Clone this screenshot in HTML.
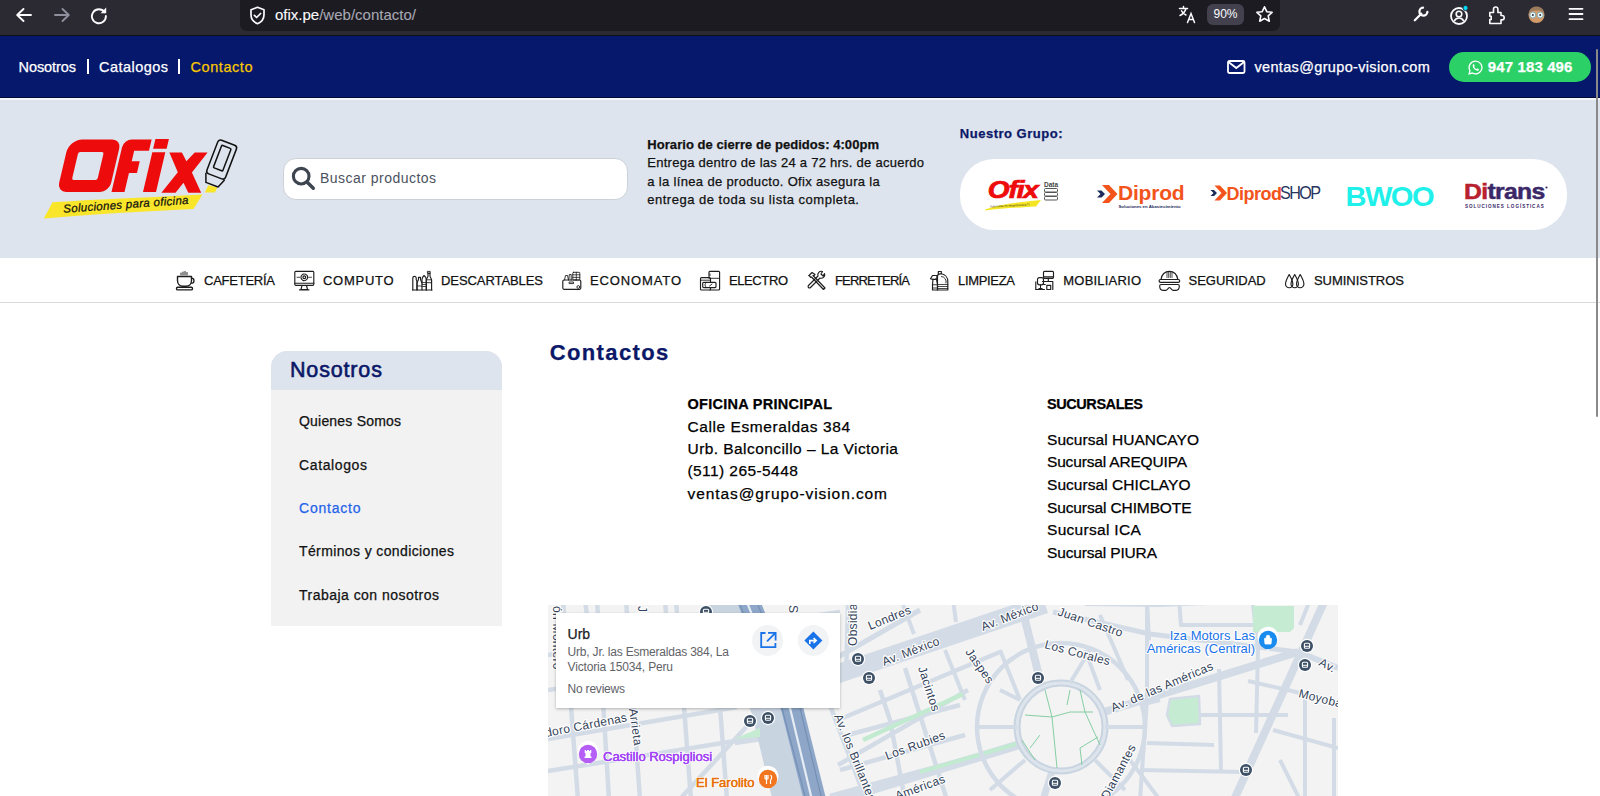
<!DOCTYPE html>
<html><head><meta charset="utf-8">
<style>
*{margin:0;padding:0;box-sizing:border-box}
html,body{width:1600px;height:796px;overflow:hidden;background:#fff;font-family:"Liberation Sans",sans-serif}
.a{position:absolute;white-space:nowrap;-webkit-text-stroke:0.25px currentColor}
#chrome{position:absolute;left:0;top:0;width:1600px;height:36px;background:#2b2a33;border-bottom:1px solid #0f0f14}
#url{position:absolute;left:240px;top:0;width:1040px;height:31px;background:#1c1b22;border-radius:0 0 7px 7px}
#topbar{position:absolute;left:0;top:36px;width:1600px;height:62px;background:#06186b;border-bottom:1px solid #020a3a}
#hdr{position:absolute;left:0;top:98px;width:1600px;height:160px;background:#dee4ed;border-top:2px solid #f3f5f9}
#nav{position:absolute;left:0;top:258px;width:1600px;height:45px;background:#fff;border-bottom:1px solid #d9d9d9}
.tb{font-size:14px;color:#fff}
.nt{font-size:14px;color:#111}
.sb{position:absolute;left:271px;top:351px;width:231px;height:275px;background:#f2f2f2;border-radius:16px 16px 0 0;overflow:hidden}
.sbh{position:absolute;left:0;top:0;width:231px;height:39px;background:#dee4ed}
.lk{font-size:13.5px;color:#111}
.ct{font-size:16px;color:#111}
#map{position:absolute;left:548px;top:605px;width:790px;height:191px;background:#f3f3f3;overflow:hidden}
</style></head><body>
<div id="chrome">
  <svg class="a" style="left:14px;top:6px" width="20" height="18" viewBox="0 0 20 18"><path d="M17 9H3.5M9.5 3L3.2 9l6.3 6" fill="none" stroke="#fbfbfe" stroke-width="1.9" stroke-linecap="round" stroke-linejoin="round"/></svg>
  <svg class="a" style="left:52px;top:6px" width="20" height="18" viewBox="0 0 20 18"><path d="M3 9h13.5M10.5 3l6.3 6-6.3 6" fill="none" stroke="#8f8f9d" stroke-width="1.9" stroke-linecap="round" stroke-linejoin="round"/></svg>
  <svg class="a" style="left:89px;top:5px" width="20" height="20" viewBox="0 0 20 20"><path d="M15.6 7.2A7 7 0 1 0 16.9 11" fill="none" stroke="#fbfbfe" stroke-width="1.9" stroke-linecap="round"/><path d="M17.2 2.6v5.6h-5.6z" fill="#fbfbfe"/></svg>
  <div id="url">
    <svg class="a" style="left:9px;top:6px" width="17" height="19" viewBox="0 0 17 19"><path d="M8.5 1.3L2 3.8v5c0 4.2 2.8 7.4 6.5 8.9 3.7-1.5 6.5-4.7 6.5-8.9v-5z" fill="none" stroke="#fbfbfe" stroke-width="1.7" stroke-linejoin="round"/><path d="M5.4 9.4l2.2 2.1 4-4" fill="none" stroke="#fbfbfe" stroke-width="1.7" stroke-linecap="round" stroke-linejoin="round"/></svg>
    <div class="a" id="urltxt" style="left:35px;top:6px;font-size:15px;color:#fbfbfe;-webkit-text-stroke:0.1px currentColor">ofix.pe<span style="color:#a8a8b3">/web/contacto/</span></div>
    <svg class="a" style="left:938px;top:5px" width="19" height="19" viewBox="0 0 19 19"><g fill="none" stroke="#fbfbfe" stroke-width="1.5" stroke-linecap="round"><path d="M1.5 3.5h8M5.5 1.5v2M8 3.5c-.8 3-2.8 5.5-6 7M3.5 5.8c1.2 2 2.8 3.4 4.5 4.2"/><path d="M9.5 17.5l3.5-9 3.5 9M10.8 14.5h4.4"/></g></svg>
    <div class="a" style="left:967px;top:4px;width:37px;height:21px;border-radius:6px;background:#42414d;color:#fbfbfe;font-size:12px;text-align:center;line-height:21px;-webkit-text-stroke:0">90%</div>
    <svg class="a" style="left:1015px;top:5px" width="19" height="19" viewBox="0 0 19 19"><path d="M9.5 1.8l2.3 4.9 5.3.6-3.9 3.6 1.1 5.3-4.8-2.7-4.8 2.7 1.1-5.3-3.9-3.6 5.3-.6z" fill="none" stroke="#fbfbfe" stroke-width="1.6" stroke-linejoin="round"/></svg>
  </div>
  <svg class="a" style="left:1412px;top:5px" width="18" height="18" viewBox="0 0 18 18"><path d="M2.8 15.2L9.3 8.7" stroke="#fbfbfe" stroke-width="2.3" stroke-linecap="round"/><path d="M11 2.6A4 4 0 1 0 15.4 7" fill="none" stroke="#fbfbfe" stroke-width="2.3" stroke-linecap="round"/></svg>
  <svg class="a" style="left:1449px;top:4px" width="22" height="22" viewBox="0 0 22 22"><circle cx="10" cy="12" r="8" fill="none" stroke="#fbfbfe" stroke-width="1.8"/><circle cx="10" cy="10" r="2.8" fill="none" stroke="#fbfbfe" stroke-width="1.6"/><path d="M5.2 17c1.2-2.2 2.8-3 4.8-3s3.6.8 4.8 3" fill="none" stroke="#fbfbfe" stroke-width="1.6"/><circle cx="16.5" cy="4" r="2.6" fill="#0df" stroke="#2b2a33" stroke-width="1"/></svg>
  <svg class="a" style="left:1488px;top:5px" width="18" height="20" viewBox="0 0 18 20"><path d="M1.8 7.5H5.5V4.2A2.2 2.2 0 0 1 9.9 4.2V7.5H13V10.5H14A2.2 2.2 0 0 1 14 14.9H13V18.5H1.8V14.5H3.2V11.2H1.8Z" fill="none" stroke="#fbfbfe" stroke-width="1.6" stroke-linejoin="round"/></svg>
  <svg class="a" style="left:1527px;top:5px" width="19" height="19" viewBox="0 0 19 19"><circle cx="9.5" cy="10" r="8" fill="#d39a6a"/><path d="M1.8 8.5C2.5 3.5 5.5 1.5 9.5 1.5S16.5 3.5 17.2 8.5C15 6 12.5 5.5 9.5 5.5S4 6 1.8 8.5Z" fill="#9c7a5c"/><circle cx="5.8" cy="10" r="3" fill="#e8f6ff" stroke="#8aa" stroke-width="1"/><circle cx="13.2" cy="10" r="3" fill="#e8f6ff" stroke="#8aa" stroke-width="1"/><circle cx="5.8" cy="10" r="1" fill="#333"/><circle cx="13.2" cy="10" r="1" fill="#333"/></svg>
  <svg class="a" style="left:1568px;top:6px" width="16" height="16" viewBox="0 0 16 16"><path d="M1.5 2.8h13M1.5 8h13M1.5 13.2h13" stroke="#fbfbfe" stroke-width="1.8" stroke-linecap="round"/></svg>
</div>
<div id="topbar">
  <div class="a" style="left:87px;top:23px;width:2px;height:15px;background:#fff"></div>
  <div class="a" style="left:178px;top:23px;width:2px;height:15px;background:#fff"></div>
  <svg class="a" style="left:1227px;top:24px" width="19" height="14" viewBox="0 0 19 14"><rect x="1" y="1" width="16.5" height="12" rx="1.5" fill="none" stroke="#fff" stroke-width="1.8"/><path d="M1.5 2l7.8 6 7.8-6" fill="none" stroke="#fff" stroke-width="1.8"/></svg>
  <div class="a" style="left:1449px;top:15.5px;width:142px;height:30px;border-radius:15px;background:#2bd066"></div>
  <svg class="a" style="left:1468px;top:23.5px" width="15" height="15" viewBox="0 0 16 16"><path d="M8 1.2a6.8 6.8 0 0 0-5.9 10.2L1.2 14.8l3.5-.9A6.8 6.8 0 1 0 8 1.2z" fill="none" stroke="#fff" stroke-width="1.4"/><path d="M5.4 4.6c.3-.3.7-.3.9 0l.8 1.5c.1.3 0 .5-.2.7l-.4.4c.5 1.1 1.4 2 2.4 2.5l.5-.5c.2-.2.4-.2.7-.1l1.4.7c.3.2.3.5.1.8-.6.9-1.4 1.1-2.4.7-1.9-.8-3.2-2.1-4-3.9-.3-.9-.2-1.8.2-2.8z" fill="#fff"/></svg>
</div>
<div id="hdr"></div>
<svg class="a" style="left:0;top:98px" width="260" height="160" viewBox="0 98 260 160">
  <path d="M43.8 218.5L52.5 202.3C100 199 150 197.5 202.5 194.5L193.5 208.9C140 211.5 95 214 43.8 218.5Z" fill="#f9e62a"/>
  <g fill="#ee0b0b" transform="translate(0,192) skewX(-13.2) translate(0,-192)">
    <path fill-rule="evenodd" d="M70 139.4H100A9 9 0 0 1 109 148.4V183A9 9 0 0 1 100 192H66A9 9 0 0 1 57 183V152.4A13 13 0 0 1 70 139.4Z M71 152H92.5A2 2 0 0 1 94.5 154V178A2 2 0 0 1 92.5 180H71A2 2 0 0 1 69 178V154A2 2 0 0 1 71 152Z"/>
    <path d="M119.5 139.4H139.3V150.7H124.5V161.3H132.5V172.9H124.5V192H111.5V147.4A8 8 0 0 1 119.5 139.4Z"/>
    <path d="M143 139H156.5V148.8H143Z M143 152.3H156V192H143Z"/>
  </g>
  <path fill="#ee0b0b" d="M169.4 152.4H181.9L186.4 161.3L194.7 152.4H207.6L191.9 172.6L201.2 192.8H188.3L183.5 182.8L175.5 192.8H161.4L177.8 172.2Z"/>
  <path d="M208.3 185.2L217.5 187.6L214.8 192.6H204.8Z" fill="#f9e62a"/>
  <g transform="translate(221.5,160) rotate(21)">
        <rect x="-10" y="-18.5" width="20" height="36" rx="3" fill="none" stroke="#111" stroke-width="1.5"/>
    <rect x="-5" y="-14" width="10" height="24" rx="1" fill="none" stroke="#111" stroke-width="1.5"/>
    <path d="M-10 17.5L-6.5 26.5H6.5L10 17.5" fill="none" stroke="#111" stroke-width="1.5" stroke-linejoin="round"/>
  </g>
  <text x="0" y="0" transform="translate(63.5,212.8) rotate(-4.1)" font-family="Liberation Sans" font-style="italic" font-size="11.5" fill="#111" stroke="#111" stroke-width="0.25" letter-spacing="0.3">Soluciones para oficina</text>
</svg>
<div class="a" style="left:283px;top:157.5px;width:345px;height:42px;background:#fff;border:1px solid #cdd2d9;border-radius:13px"></div>
<svg class="a" style="left:288px;top:163px" width="30" height="30" viewBox="288 163 30 30"><circle cx="301.2" cy="176.2" r="7.8" fill="none" stroke="#3d4550" stroke-width="3.1"/><path d="M307 182L313.3 188.3" stroke="#3d4550" stroke-width="3.4" stroke-linecap="round"/></svg>
<div class="a" style="left:960px;top:158.5px;width:607px;height:71px;background:#fff;border-radius:34px"></div>
<svg class="a" style="left:960px;top:158px" width="607" height="72" viewBox="960 158 607 72">
  <!-- Ofix Data -->
  <path d="M985 209.5C1000 204 1020 202 1041 200L1036 206.5C1020 207.5 1000 208.5 985 210.5Z" fill="#f5e625"/>
  <text x="988" y="198.5" font-family="Liberation Sans" font-weight="bold" font-style="italic" font-size="25" fill="#ee0b0b" stroke="#ee0b0b" stroke-width="0.8" letter-spacing="-1" transform="translate(989,198.5) scale(1.12,0.92) translate(-989,-198.5)">Ofix</text>
  <text x="1044" y="187" font-family="Liberation Sans" font-weight="bold" font-size="6.5" fill="#444">Data</text>
  <g fill="none" stroke="#555" stroke-width="1"><rect x="1044.5" y="188.5" width="13" height="3.5" rx="1"/><rect x="1044.5" y="192.5" width="13" height="3.5" rx="1"/><rect x="1044.5" y="196.5" width="13" height="3.5" rx="1"/></g>
  <text x="990" y="206.5" font-family="Liberation Sans" font-size="2.8" fill="#222" transform="rotate(-3 1010 206)">Soluciones en infraestructura TI</text>
  <!-- Diprod -->
  <path d="M1097 190.5h4.5l3.5 3.5-3.5 3.5h-4.5l3.5-3.5z" fill="#1c2a5a"/>
  <path d="M1102 185h7l8.5 9-8.5 9h-7l8.5-9z" fill="#f2541b"/>
  <text x="1118" y="199.5" font-family="Liberation Sans" font-weight="bold" font-size="21" fill="#f2541b" letter-spacing="-0.2">Diprod</text>
  <text x="1118.5" y="208" font-family="Liberation Sans" font-weight="bold" font-size="4.3" fill="#1c2a5a">Soluciones en Abastecimiento</text>
  <!-- DiprodSHOP -->
  <path d="M1210.5 190h3.5l3 3-3 3h-3.5l3-3z" fill="#1c2a5a"/>
  <path d="M1214.5 185.5h5.5l7 7.5-7 7.5h-5.5l7-7.5z" fill="#f2541b"/>
  <text x="1226.5" y="199.5" font-family="Liberation Sans" font-weight="bold" font-size="18" fill="#f2541b" letter-spacing="-0.5">Diprod</text>
  <text x="1280" y="199.5" font-family="Liberation Sans" font-size="18" fill="#27355f" letter-spacing="-1.8" transform="translate(1280,199.5) scale(0.9,1.05) translate(-1280,-199.5)">SHOP</text>
  <!-- BWOO -->
  <text x="1345.5" y="206.5" font-family="Liberation Sans" font-weight="bold" font-size="30" fill="#1ff0ea" letter-spacing="-1.6" transform="translate(1345.5,206.5) scale(0.97,0.9) translate(-1345.5,-206.5)">BWOO</text>
  <!-- Ditrans -->
  <text x="1464" y="199.5" font-family="Liberation Sans" font-weight="bold" font-size="22.5" letter-spacing="-0.6" stroke-width="0.5" transform="translate(1464,199.5) scale(1.1,1) translate(-1464,-199.5)"><tspan fill="#b8222f" stroke="#b8222f">Di</tspan><tspan fill="#3b2868" stroke="#3b2868">trans</tspan></text>
  <circle cx="1546.5" cy="187.5" r="1.1" fill="#3b2868"/>
  <text x="1465" y="207.5" font-family="Liberation Sans" font-weight="bold" font-size="4.6" fill="#3b2868" letter-spacing="0.95">SOLUCIONES LOGÍSTICAS</text>
</svg>
<div id="nav"></div>
<svg class="a" style="left:0;top:258px" width="1600" height="44" viewBox="0 258 1600 44">
<g fill="none" stroke="#1e1e1e" stroke-width="1.15" stroke-linejoin="round" stroke-linecap="round">
  <!-- cup -->
  <path d="M177.5 276.5H191.5V280.5C191.5 284 189 286.2 186 286.2H183C180 286.2 177.5 284 177.5 280.5Z" stroke-width="1.4"/>
  <path d="M191.5 278.2A2.5 2.5 0 0 1 191.5 283.2" stroke-width="1.3"/>
  <rect x="176.5" y="287.3" width="16" height="2.6" rx="1.2" stroke-width="1.4"/>
  <path d="M181 275V273M183 275V272M185 275V271.5M187 275V272.5" stroke-width="1"/>
  <!-- monitor -->
  <rect x="294.8" y="271.3" width="19" height="14" rx="1"/>
  <path d="M294.8 283.2H313.8M302 285.5L301 289.5H307.5L306.5 285.5M299.5 289.8H309"/>
  <circle cx="304.3" cy="277.3" r="1.4"/><circle cx="304.3" cy="277.3" r="3.3" stroke-dasharray="1.6 1"/>
  <path d="M297 277.3H300M308.6 277.3H311.5" stroke-width="0.8"/>
  <!-- bottles -->
  <path d="M412.5 290H432"/>
  <path d="M412.8 290V278A1.7 1.7 0 0 1 416.2 278V279.5L417 281.5V290"/>
  <path d="M417 290V283C417 281.5 418.5 281 418.5 279V277.3H420.5V279C420.5 281 422 281.5 422 283"/>
  <path d="M422 290V279.5C422 277.5 423 276.5 424.1 275.5C425.2 276.5 426.3 277.5 426.3 279.5V290"/>
  <path d="M422 282.5H426.3M422 284.5H426.3M422 286.5H426.3M417.5 286H421.5" stroke-width="0.8"/>
  <path d="M426.3 290V280C426.3 278.5 428 277.5 428 276V273.2H430V276C430 277.5 431.6 278.5 431.6 280V290"/>
  <path d="M427.8 271.4H430.2V273.2H427.8ZM426.3 279.8H431.6M426.3 282.7H431.6" stroke-width="0.9"/>
  <!-- economato -->
  <rect x="562.8" y="280" width="18" height="9.3" rx="1.2"/>
  <path d="M569.5 282H573.5V283.6H569.5Z" stroke-width="0.9"/>
  <circle cx="578.3" cy="287" r="1.4" stroke-width="0.9"/>
  <path d="M564.5 280L565.5 275.5H567.5L568.5 280M568.8 280L569.3 274.5H571.2V280" stroke-width="0.9"/>
  <rect x="572.8" y="272.3" width="7" height="7.7" rx="0.8" stroke-width="0.9"/>
  <path d="M572.8 274.8H579.8M572.8 277.4H579.8M576.3 272.3V280" stroke-width="0.8"/>
  <!-- electro -->
  <path d="M709 277.6V272.3A1 1 0 0 1 710 271.3H718.6A1 1 0 0 1 719.6 272.3V289A1 1 0 0 1 718.6 290H710"/>
  <path d="M709 278.3H719.6M710 274V275.5" stroke-width="0.9"/>
  <rect x="700.5" y="277.6" width="10" height="12.4" rx="1"/>
  <path d="M700.5 280.2H710.5" stroke-width="0.9"/>
  <rect x="702.7" y="282.3" width="13.3" height="5.3" rx="1" fill="#fff"/>
  <path d="M706.5 282.5A2.7 2.7 0 0 0 706.5 287.4M709.5 286L712 284" stroke-width="0.9"/>
  <!-- tools -->
  <path d="M809 275.5L812 272.5L815 274.5L813.5 276M813 275.5L825 288L823.5 289.5L811.5 277" />
  <path d="M809 275.5L811 277.5"/>
  <path d="M824.5 273.5A3.5 3.5 0 0 1 820 278L810.5 287.5A1.2 1.2 0 0 1 808.5 285.5L818 276A3.5 3.5 0 0 1 822.5 271.5L821 274L823 276Z"/>
  <!-- limpieza -->
  <path d="M930.5 278.8L932.5 275.5H936.5L937.3 277.2L935.5 279.4H932.8Z"/>
  <path d="M933 279.4L932.5 284.5V290H937.5V284.5L936.5 279.4"/>
  <path d="M932.5 284.8H937.5M932.5 288H937.5" stroke-width="0.9"/>
  <path d="M938.3 273.8V271.5H941.3V273.8M937.5 290V276.5C937.5 275 938.5 273.8 940 273.8H941.5C945 274.5 947.8 277.5 947.8 281.5V290Z"/>
  <path d="M941.5 276.5A5 5 0 0 1 946 283" stroke-width="0.9"/>
  <path d="M937.5 284.5H947.8M937.5 286.5H947.8M937.5 288.5H947.8" stroke-width="0.8"/>
  <!-- mobiliario -->
  <rect x="1043.5" y="271.3" width="10" height="7" rx="1"/>
  <path d="M1043.5 276.8H1053.5M1048.3 278.3V281.5M1042.5 281.5H1052.8M1035.8 281.8V289.5M1052.8 281.5V289.5M1046.8 285.3H1050.7V289.5H1046.8ZM1035.6 289.5H1044.5"/>
  <rect x="1037.5" y="277.6" width="6" height="7.2" rx="2"/>
  <path d="M1043.5 284.5H1045.3M1040.5 284.8V289.3M1037.8 289.3L1040.5 288L1043.2 289.3" stroke-width="1"/>
  <!-- helmet -->
  <path d="M1161 279.5C1161.5 274.5 1165 271.3 1169.4 271.3C1173.8 271.3 1177.3 274.5 1177.8 279.5"/>
  <path d="M1160.5 279.5H1178.3A1.4 1.4 0 0 1 1178.3 282.3H1160.5A1.4 1.4 0 0 1 1160.5 279.5Z" stroke-width="1.2"/>
  <path d="M1167 272.5V277.5M1168.7 272V277.5M1170.3 272V277.5M1172 272.5V277.5" stroke-width="0.8"/>
  <path d="M1161 284.5H1178C1178.8 284.5 1179.3 285.2 1179.3 286C1179.3 288.5 1178 290.3 1176 290.3H1173C1171.5 290.3 1170.5 287.5 1169.5 287.5C1168.5 287.5 1167.5 290.3 1166 290.3H1163C1161 290.3 1159.7 288.5 1159.7 286C1159.7 285.2 1160.2 284.5 1161 284.5Z"/>
  <!-- drops -->
  <path d="M1289.2 274.5C1287 278.5 1285.5 281 1285.5 284A3.7 3.7 0 0 0 1292.9 284C1292.9 281 1291.4 278.5 1289.2 274.5Z"/>
  <path d="M1294.7 274.5C1292.5 278.5 1291 281 1291 284A3.7 3.7 0 0 0 1298.4 284C1298.4 281 1296.9 278.5 1294.7 274.5Z"/>
  <path d="M1300.2 274.5C1298 278.5 1296.5 281 1296.5 284A3.7 3.7 0 0 0 1303.9 284C1303.9 281 1302.4 278.5 1300.2 274.5Z"/>
</g></svg>
<div class="sb"><div class="sbh"></div></div>
<svg class="a" style="left:548px;top:605px" width="790" height="191" viewBox="548 605 790 191" font-family="Liberation Sans">
<defs><filter id="sh" x="-10%" y="-10%" width="120%" height="130%"><feDropShadow dx="0" dy="1" stdDeviation="1.5" flood-color="#000" flood-opacity="0.28"/></filter></defs>
<rect x="548" y="605" width="790" height="191" fill="#f3f3f3"/>
<path d="M563,600 L578,800" fill="none" stroke="#d3dce6" stroke-width="4.5" stroke-linejoin="round" stroke-linecap="butt"/><path d="M597,600 L609,800" fill="none" stroke="#d3dce6" stroke-width="4.5" stroke-linejoin="round" stroke-linecap="butt"/><path d="M626,600 L640,800" fill="none" stroke="#d3dce6" stroke-width="4.5" stroke-linejoin="round" stroke-linecap="butt"/><path d="M676,600 L691,800" fill="none" stroke="#d3dce6" stroke-width="4.5" stroke-linejoin="round" stroke-linecap="butt"/><path d="M712,600 L727,800" fill="none" stroke="#d3dce6" stroke-width="4.5" stroke-linejoin="round" stroke-linecap="butt"/><path d="M585,600 L590,640" fill="none" stroke="#d3dce6" stroke-width="4.5" stroke-linejoin="round" stroke-linecap="butt"/><path d="M665,600 L668,640" fill="none" stroke="#d3dce6" stroke-width="4.5" stroke-linejoin="round" stroke-linecap="butt"/><path d="M548,739 L737,707" fill="none" stroke="#d3dce6" stroke-width="4.5" stroke-linejoin="round" stroke-linecap="butt"/><path d="M548,771 L760,737" fill="none" stroke="#d3dce6" stroke-width="4.5" stroke-linejoin="round" stroke-linecap="butt"/><path d="M679,800 L760,712" fill="none" stroke="#d3dce6" stroke-width="4.5" stroke-linejoin="round" stroke-linecap="butt"/><path d="M548,655 L840,612" fill="none" stroke="#d3dce6" stroke-width="4.5" stroke-linejoin="round" stroke-linecap="butt"/><path d="M548,690 L700,668" fill="none" stroke="#d3dce6" stroke-width="4.5" stroke-linejoin="round" stroke-linecap="butt"/><path d="M735,743 L762,739" fill="none" stroke="#d3dce6" stroke-width="4.5" stroke-linejoin="round" stroke-linecap="butt"/><path d="M722,600 L768,708 L790,800" fill="none" stroke="#c9d4e1" stroke-width="34" stroke-linejoin="round" stroke-linecap="butt"/><path d="M748,600 L792,708 L815,800" fill="none" stroke="#8ea7c9" stroke-width="22" stroke-linejoin="round" stroke-linecap="butt"/><path d="M746,600 L790,708 L812,800" fill="none" stroke="#e6ecf3" stroke-width="2.2" stroke-linejoin="round" stroke-linecap="butt"/><path d="M756,600 L800,708 L822,800" fill="none" stroke="#7590b5" stroke-width="1.2" stroke-linejoin="round" stroke-linecap="butt"/><path d="M738,600 L782,708 L806,800" fill="none" stroke="#7590b5" stroke-width="1.2" stroke-linejoin="round" stroke-linecap="butt"/><path d="M828,700 L866,800" fill="none" stroke="#d3dce6" stroke-width="4.5" stroke-linejoin="round" stroke-linecap="butt"/><path d="M848,605 L846,680" fill="none" stroke="#d3dce6" stroke-width="4.5" stroke-linejoin="round" stroke-linecap="butt"/><path d="M840,737 L960,705" fill="none" stroke="#d3dce6" stroke-width="4.5" stroke-linejoin="round" stroke-linecap="butt"/><path d="M840,770 L965,735" fill="none" stroke="#d3dce6" stroke-width="4.5" stroke-linejoin="round" stroke-linecap="butt"/><path d="M830,796 L1016,745" fill="none" stroke="#d3dce6" stroke-width="4.5" stroke-linejoin="round" stroke-linecap="butt"/><path d="M760,700 L1045,604" fill="none" stroke="#d3dce6" stroke-width="19" stroke-linejoin="round" stroke-linecap="butt"/><path d="M838,657 L920,610" fill="none" stroke="#d3dce6" stroke-width="5" stroke-linejoin="round" stroke-linecap="butt"/><path d="M903,605 L914,634" fill="none" stroke="#d3dce6" stroke-width="4" stroke-linejoin="round" stroke-linecap="butt"/><path d="M953,600 L956,622" fill="none" stroke="#d3dce6" stroke-width="4" stroke-linejoin="round" stroke-linecap="butt"/><path d="M905,668 L947,800" fill="none" stroke="#d3dce6" stroke-width="4.5" stroke-linejoin="round" stroke-linecap="butt"/><path d="M880,690 L890,720 L905,800" fill="none" stroke="#d3dce6" stroke-width="4.5" stroke-linejoin="round" stroke-linecap="butt"/><path d="M945,650 L965,700" fill="none" stroke="#d3dce6" stroke-width="4" stroke-linejoin="round" stroke-linecap="butt"/><path d="M838,720 L1000,652" fill="none" stroke="#d3dce6" stroke-width="4.5" stroke-linejoin="round" stroke-linecap="butt"/><path d="M838,765 L968,690" fill="none" stroke="#d3dce6" stroke-width="4.5" stroke-linejoin="round" stroke-linecap="butt"/><path d="M863,740 L963,694" fill="none" stroke="#c2ead0" stroke-width="4.5" stroke-linejoin="round" stroke-linecap="butt"/><path d="M838,800 L1018,745" fill="none" stroke="#d3dce6" stroke-width="9" stroke-linejoin="round" stroke-linecap="butt"/><path d="M920,772 L1016,744" fill="none" stroke="#c2ead0" stroke-width="4" stroke-linejoin="round" stroke-linecap="butt"/><path d="M1020,600 L1041,684" fill="none" stroke="#d3dce6" stroke-width="8" stroke-linejoin="round" stroke-linecap="butt"/><path d="M1053,768 L1043,800" fill="none" stroke="#d3dce6" stroke-width="7" stroke-linejoin="round" stroke-linecap="butt"/><path d="M1104,712 L1298,652" fill="none" stroke="#d3dce6" stroke-width="8" stroke-linejoin="round" stroke-linecap="butt"/><path d="M1298,652 L1338,668" fill="none" stroke="#d3dce6" stroke-width="6" stroke-linejoin="round" stroke-linecap="butt"/><path d="M1053,612 L1150,634 L1298,652" fill="none" stroke="#d3dce6" stroke-width="5" stroke-linejoin="round" stroke-linecap="butt"/><path d="M1085,604 L1160,605 L1230,602" fill="none" stroke="#d3dce6" stroke-width="4" stroke-linejoin="round" stroke-linecap="butt"/><path d="M1325,600 L1234,800" fill="none" stroke="#d3dce6" stroke-width="8" stroke-linejoin="round" stroke-linecap="butt"/><path d="M1310,600 L1300,625" fill="none" stroke="#d3dce6" stroke-width="4" stroke-linejoin="round" stroke-linecap="butt"/><path d="M1147,600 L1149,640" fill="none" stroke="#d3dce6" stroke-width="4" stroke-linejoin="round" stroke-linecap="butt"/><path d="M1179,600 L1181,625 L1253,625" fill="none" stroke="#d3dce6" stroke-width="4" stroke-linejoin="round" stroke-linecap="butt"/><path d="M1253,605 L1258,650 L1256,733" fill="none" stroke="#d3dce6" stroke-width="4" stroke-linejoin="round" stroke-linecap="butt"/><path d="M1219,669 L1221,772" fill="none" stroke="#d3dce6" stroke-width="4" stroke-linejoin="round" stroke-linecap="butt"/><path d="M1305,698 L1305,800" fill="none" stroke="#d3dce6" stroke-width="4" stroke-linejoin="round" stroke-linecap="butt"/><path d="M1334,718 L1334,800" fill="none" stroke="#d3dce6" stroke-width="4" stroke-linejoin="round" stroke-linecap="butt"/><path d="M1200,715 L1288,715" fill="none" stroke="#d3dce6" stroke-width="4" stroke-linejoin="round" stroke-linecap="butt"/><path d="M1147,743 L1214,745" fill="none" stroke="#d3dce6" stroke-width="4" stroke-linejoin="round" stroke-linecap="butt"/><path d="M1140,770 L1243,772" fill="none" stroke="#d3dce6" stroke-width="4" stroke-linejoin="round" stroke-linecap="butt"/><path d="M1292,691 L1338,703" fill="none" stroke="#d3dce6" stroke-width="4" stroke-linejoin="round" stroke-linecap="butt"/><path d="M1248,681 L1292,691" fill="none" stroke="#d3dce6" stroke-width="4" stroke-linejoin="round" stroke-linecap="butt"/><path d="M1273,730 L1338,748" fill="none" stroke="#d3dce6" stroke-width="4" stroke-linejoin="round" stroke-linecap="butt"/><path d="M1280,760 L1300,800" fill="none" stroke="#d3dce6" stroke-width="4" stroke-linejoin="round" stroke-linecap="butt"/><path d="M1000,650 L1020,700" fill="none" stroke="#d3dce6" stroke-width="4" stroke-linejoin="round" stroke-linecap="butt"/><path d="M1085,650 L1100,690" fill="none" stroke="#d3dce6" stroke-width="4" stroke-linejoin="round" stroke-linecap="butt"/><path d="M1100,615 L1128,680" fill="none" stroke="#d3dce6" stroke-width="4" stroke-linejoin="round" stroke-linecap="butt"/><path d="M1130,760 L1160,800" fill="none" stroke="#d3dce6" stroke-width="4" stroke-linejoin="round" stroke-linecap="butt"/><path d="M1140,705 L1160,700" fill="none" stroke="#d3dce6" stroke-width="4" stroke-linejoin="round" stroke-linecap="butt"/><path d="M1147,600 L1147,700 L1140,800" fill="none" stroke="#d3dce6" stroke-width="4" stroke-linejoin="round" stroke-linecap="butt"/><circle cx="1061" cy="727" r="84" fill="none" stroke="#d3dce6" stroke-width="4.5"/><circle cx="1061" cy="727" r="44" fill="none" stroke="#c9d4e1" stroke-width="7"/><circle cx="1061" cy="727" r="44" fill="none" stroke="#dde4ec" stroke-width="3"/><path d="M977,727 L1017,727" fill="none" stroke="#d3dce6" stroke-width="4" stroke-linejoin="round" stroke-linecap="butt"/><path d="M1105,727 L1145,727" fill="none" stroke="#d3dce6" stroke-width="4" stroke-linejoin="round" stroke-linecap="butt"/><path d="M1070,683 L1090,650" fill="none" stroke="#d3dce6" stroke-width="4" stroke-linejoin="round" stroke-linecap="butt"/><path d="M1095,760 L1125,790" fill="none" stroke="#d3dce6" stroke-width="4" stroke-linejoin="round" stroke-linecap="butt"/><path d="M1025,760 L990,790" fill="none" stroke="#d3dce6" stroke-width="4" stroke-linejoin="round" stroke-linecap="butt"/><path d="M1000,690 L1020,700" fill="none" stroke="#d3dce6" stroke-width="4" stroke-linejoin="round" stroke-linecap="butt"/>
<path d="M1170 699L1199 696L1200 724L1172 726L1167 715Z" fill="#c5ecd2" stroke="#d3dce6" stroke-width="2.5" stroke-linejoin="round"/>
<path d="M1253 606H1294V628L1290 632H1253Z" fill="#c5ecd2"/>
<path d="M736 738L760 728L760 737L734 739Z" fill="#c5ecd2"/>
<g fill="none" stroke="#79c99a" stroke-width="0.9"><path d="M1025 715L1052 717L1070 712L1093 712M1045 690L1052 717L1057 768M1080 690L1085 712L1100 745M1070 690L1067 705M1030 748L1040 735M1082 765L1080 748L1098 737M1022 740L1035 760"/></g>
<g transform="translate(858,659)"><circle r="7.2" fill="#fff"/><circle r="6" fill="#3d5066"/><rect x="-2.6" y="-2.8" width="5.2" height="5" rx="1" fill="none" stroke="#fff" stroke-width="1.1"/><path d="M-2.6 0.3H2.6" stroke="#fff" stroke-width="1"/></g><g transform="translate(869,678)"><circle r="7.2" fill="#fff"/><circle r="6" fill="#3d5066"/><rect x="-2.6" y="-2.8" width="5.2" height="5" rx="1" fill="none" stroke="#fff" stroke-width="1.1"/><path d="M-2.6 0.3H2.6" stroke="#fff" stroke-width="1"/></g><g transform="translate(1038,678)"><circle r="7.2" fill="#fff"/><circle r="6" fill="#3d5066"/><rect x="-2.6" y="-2.8" width="5.2" height="5" rx="1" fill="none" stroke="#fff" stroke-width="1.1"/><path d="M-2.6 0.3H2.6" stroke="#fff" stroke-width="1"/></g><g transform="translate(1055,783)"><circle r="7.2" fill="#fff"/><circle r="6" fill="#3d5066"/><rect x="-2.6" y="-2.8" width="5.2" height="5" rx="1" fill="none" stroke="#fff" stroke-width="1.1"/><path d="M-2.6 0.3H2.6" stroke="#fff" stroke-width="1"/></g><g transform="translate(1307,646)"><circle r="7.2" fill="#fff"/><circle r="6" fill="#3d5066"/><rect x="-2.6" y="-2.8" width="5.2" height="5" rx="1" fill="none" stroke="#fff" stroke-width="1.1"/><path d="M-2.6 0.3H2.6" stroke="#fff" stroke-width="1"/></g><g transform="translate(1305,665)"><circle r="7.2" fill="#fff"/><circle r="6" fill="#3d5066"/><rect x="-2.6" y="-2.8" width="5.2" height="5" rx="1" fill="none" stroke="#fff" stroke-width="1.1"/><path d="M-2.6 0.3H2.6" stroke="#fff" stroke-width="1"/></g><g transform="translate(1246,770)"><circle r="7.2" fill="#fff"/><circle r="6" fill="#3d5066"/><rect x="-2.6" y="-2.8" width="5.2" height="5" rx="1" fill="none" stroke="#fff" stroke-width="1.1"/><path d="M-2.6 0.3H2.6" stroke="#fff" stroke-width="1"/></g><g transform="translate(750,721)"><circle r="7.2" fill="#fff"/><circle r="6" fill="#3d5066"/><rect x="-2.6" y="-2.8" width="5.2" height="5" rx="1" fill="none" stroke="#fff" stroke-width="1.1"/><path d="M-2.6 0.3H2.6" stroke="#fff" stroke-width="1"/></g><g transform="translate(768,718)"><circle r="7.2" fill="#fff"/><circle r="6" fill="#3d5066"/><rect x="-2.6" y="-2.8" width="5.2" height="5" rx="1" fill="none" stroke="#fff" stroke-width="1.1"/><path d="M-2.6 0.3H2.6" stroke="#fff" stroke-width="1"/></g><g transform="translate(706,612)"><circle r="7.2" fill="#fff"/><circle r="6" fill="#3d5066"/><rect x="-2.6" y="-2.8" width="5.2" height="5" rx="1" fill="none" stroke="#fff" stroke-width="1.1"/><path d="M-2.6 0.3H2.6" stroke="#fff" stroke-width="1"/></g>
<text transform="translate(870,630) rotate(-22)" font-size="12" fill="#34435a" stroke="#fff" stroke-width="2.2" paint-order="stroke" letter-spacing="0.3">Londres</text><text transform="translate(884,666) rotate(-21)" font-size="12" fill="#34435a" stroke="#fff" stroke-width="2.2" paint-order="stroke" letter-spacing="0.3">Av. México</text><text transform="translate(983,631) rotate(-21)" font-size="12" fill="#34435a" stroke="#fff" stroke-width="2.2" paint-order="stroke" letter-spacing="0.3">Av. México</text><text transform="translate(857,646) rotate(-90)" font-size="12" fill="#34435a" stroke="#fff" stroke-width="2.2" paint-order="stroke" letter-spacing="0.3">Obsidia</text><text transform="translate(918,668) rotate(72)" font-size="12" fill="#34435a" stroke="#fff" stroke-width="2.2" paint-order="stroke" letter-spacing="0.3">Jacintos</text><text transform="translate(965,652) rotate(55)" font-size="12" fill="#34435a" stroke="#fff" stroke-width="2.2" paint-order="stroke" letter-spacing="0.3">Jaspes</text><text transform="translate(1057,615) rotate(19)" font-size="12" fill="#34435a" stroke="#fff" stroke-width="2.2" paint-order="stroke" letter-spacing="0.3">Juan Castro</text><text transform="translate(1044,648) rotate(15)" font-size="12" fill="#34435a" stroke="#fff" stroke-width="2.2" paint-order="stroke" letter-spacing="0.3">Los Corales</text><text transform="translate(1113,712) rotate(-23)" font-size="12" fill="#34435a" stroke="#fff" stroke-width="2.2" paint-order="stroke" letter-spacing="0.3">Av. de las Américas</text><text transform="translate(887,760) rotate(-20)" font-size="12" fill="#34435a" stroke="#fff" stroke-width="2.2" paint-order="stroke" letter-spacing="0.3">Los Rubies</text><text transform="translate(897,800) rotate(-20)" font-size="12" fill="#34435a" stroke="#fff" stroke-width="2.2" paint-order="stroke" letter-spacing="0.3">Américas</text><text transform="translate(1108,800) rotate(-62)" font-size="12" fill="#34435a" stroke="#fff" stroke-width="2.2" paint-order="stroke" letter-spacing="0.3">Diamantes</text><text transform="translate(1298,697) rotate(14)" font-size="12" fill="#34435a" stroke="#fff" stroke-width="2.2" paint-order="stroke" letter-spacing="0.3">Moyoba</text><text transform="translate(1318,665) rotate(27)" font-size="12" fill="#34435a" stroke="#fff" stroke-width="2.2" paint-order="stroke" letter-spacing="0.3">Av.</text><text transform="translate(834,716) rotate(68)" font-size="12" fill="#34435a" stroke="#fff" stroke-width="2.2" paint-order="stroke" letter-spacing="0.3">Av. los Brillantes</text><text transform="translate(546,737) rotate(-11)" font-size="12" fill="#34435a" stroke="#fff" stroke-width="2.2" paint-order="stroke" letter-spacing="0.3">doro Cárdenas</text><text transform="translate(629,709) rotate(82)" font-size="12" fill="#34435a" stroke="#fff" stroke-width="2.2" paint-order="stroke" letter-spacing="0.3">Arrieta</text><text transform="translate(553,606) rotate(90)" font-size="12" fill="#34435a" stroke="#fff" stroke-width="2.2" paint-order="stroke" letter-spacing="0.3">ón Montero</text><text transform="translate(789,605) rotate(90)" font-size="12" fill="#34435a" stroke="#fff" stroke-width="2.2" paint-order="stroke" letter-spacing="0.3">S</text><text transform="translate(638,606) rotate(90)" font-size="12" fill="#34435a" stroke="#fff" stroke-width="2.2" paint-order="stroke" letter-spacing="0.3">Jr</text>
<g transform="translate(588,754)"><path d="M-8.8 3A10.5 10.5 0 1 1 8.8 3L0 11Z" fill="#fff"/><circle r="9.2" fill="#b45ef5"/><path d="M-3.5 4H3.5V2.5H2.5V-1H3.3V-4H2V-3H1V-4H-1V-3H-2V-4H-3.3V-1H-2.5V2.5H-3.5Z" fill="#fff"/></g>
<text x="603" y="761" font-size="13" fill="#a142f4" stroke="#fff" stroke-width="2" paint-order="stroke">Castillo Rospigliosi</text><text x="603" y="761" font-size="13" fill="#a142f4" stroke="#a142f4" stroke-width="0.35">Castillo Rospigliosi</text>
<g transform="translate(768,779)"><path d="M-8.8 3A10.5 10.5 0 1 1 8.8 3L0 11Z" fill="#fff"/><circle r="9.2" fill="#f2761f"/><path d="M-3 -4V0M-1.5 -4V0M0 -4V0M-3 0H0M-1.5 0V5M2.5 -4C4 -3 4 0 2.5 1V5" stroke="#fff" stroke-width="1.2" fill="none"/></g>
<text x="696" y="787" font-size="13" fill="#e8710a" stroke="#fff" stroke-width="2" paint-order="stroke">El Farolito</text><text x="696" y="787" font-size="13" fill="#e8710a" stroke="#e8710a" stroke-width="0.35">El Farolito</text>
<g transform="translate(1268,640)"><path d="M-8.8 3A10.5 10.5 0 1 1 8.8 3L0 11Z" fill="#fff"/><circle r="9.2" fill="#1a8cf0"/><path d="M-3.5 -1.5H3.5L3 4H-3Z M-1.8 -1.5V-3A1.8 1.8 0 0 1 1.8 -3V-1.5" fill="#fff" stroke="#fff" stroke-width="0.8"/></g>
<text x="1255" y="640" text-anchor="end" font-size="13" fill="#1a73e8" stroke="#fff" stroke-width="2" paint-order="stroke">Iza Motors Las</text>
<text x="1255" y="653" text-anchor="end" font-size="13" fill="#1a73e8" stroke="#fff" stroke-width="2" paint-order="stroke">Américas (Central)</text>
<rect x="556" y="613" width="284" height="95" fill="#fff" filter="url(#sh)"/>
<circle cx="767.6" cy="640.4" r="15.5" fill="#f1f3f4"/><circle cx="813.4" cy="640.4" r="15.5" fill="#f1f3f4"/>
<path d="M765.5 633H761.2V647.2H775.4V643M768 632.8H775.6V640.4M775.2 633.2L767 641.4" fill="none" stroke="#1a73e8" stroke-width="1.8"/>
<path d="M813.4 631.4L822.4 640.4L813.4 649.4L804.4 640.4Z" fill="#1a73e8"/>
<path d="M809.8 644V640.6H815.8M813.6 638.2L816.2 640.6L813.6 643" fill="none" stroke="#fff" stroke-width="1.6"/>
</svg>
<div class="a" style="left:1595.5px;top:48.5px;width:2.2px;height:368px;background:#8a8a8a;border-radius:1px"></div>
<div class="a" id="t1" style="left:18.5px;top:60.03px;font-size:14.5px;line-height:1;color:#fff;letter-spacing:-0.076px;">Nosotros</div>
<div class="a" id="t2" style="left:99.0px;top:60.03px;font-size:14.5px;line-height:1;color:#fff;letter-spacing:0.463px;">Catalogos</div>
<div class="a" id="t3" style="left:190.5px;top:60.03px;font-size:14.5px;line-height:1;color:#f7c600;letter-spacing:0.565px;">Contacto</div>
<div class="a" id="t4" style="left:1254.4px;top:60.03px;font-size:14.5px;line-height:1;color:#fff;letter-spacing:0.343px;">ventas@grupo-vision.com</div>
<div class="a" id="t5" style="left:1487.8px;top:59.00px;font-size:15px;line-height:1;color:#fff;font-weight:700;letter-spacing:0.118px;">947 183 496</div>
<div class="a" id="h1" style="left:320.0px;top:171.15px;font-size:14px;line-height:1;color:#4b5260;letter-spacing:0.470px;-webkit-text-stroke:0;">Buscar productos</div>
<div class="a" id="h2" style="left:647.3px;top:137.90px;font-size:13px;line-height:1;color:#111;font-weight:700;letter-spacing:0.056px;">Horario de cierre de pedidos: 4:00pm</div>
<div class="a" id="h3" style="left:647.3px;top:156.40px;font-size:13px;line-height:1;color:#111;letter-spacing:0.260px;">Entrega dentro de las 24 a 72 hrs. de acuerdo</div>
<div class="a" id="h4" style="left:647.3px;top:174.90px;font-size:13px;line-height:1;color:#111;letter-spacing:0.337px;">a la línea de producto. Ofix asegura la</div>
<div class="a" id="h5" style="left:647.3px;top:192.70px;font-size:13px;line-height:1;color:#111;letter-spacing:0.502px;">entrega de toda su lista completa.</div>
<div class="a" id="h6" style="left:959.8px;top:127.20px;font-size:13px;line-height:1;color:#0b1868;font-weight:700;letter-spacing:0.511px;">Nuestro Grupo:</div>
<div class="a" id="n1" style="left:204.0px;top:274.20px;font-size:13px;line-height:1;color:#111;letter-spacing:-0.246px;">CAFETERÍA</div>
<div class="a" id="n2" style="left:323.0px;top:274.20px;font-size:13px;line-height:1;color:#111;letter-spacing:0.730px;">COMPUTO</div>
<div class="a" id="n3" style="left:441.0px;top:274.20px;font-size:13px;line-height:1;color:#111;letter-spacing:-0.077px;">DESCARTABLES</div>
<div class="a" id="n4" style="left:590.0px;top:274.20px;font-size:13px;line-height:1;color:#111;letter-spacing:0.871px;">ECONOMATO</div>
<div class="a" id="n5" style="left:729.0px;top:274.20px;font-size:13px;line-height:1;color:#111;letter-spacing:-0.401px;">ELECTRO</div>
<div class="a" id="n6" style="left:835.0px;top:274.20px;font-size:13px;line-height:1;color:#111;letter-spacing:-0.816px;">FERRETERÍA</div>
<div class="a" id="n7" style="left:958.0px;top:274.20px;font-size:13px;line-height:1;color:#111;letter-spacing:-0.321px;">LIMPIEZA</div>
<div class="a" id="n8" style="left:1063.3px;top:274.20px;font-size:13px;line-height:1;color:#111;letter-spacing:0.205px;">MOBILIARIO</div>
<div class="a" id="n9" style="left:1188.5px;top:274.20px;font-size:13px;line-height:1;color:#111;letter-spacing:-0.012px;">SEGURIDAD</div>
<div class="a" id="n10" style="left:1313.9px;top:274.20px;font-size:13px;line-height:1;color:#111;letter-spacing:-0.020px;">SUMINISTROS</div>
<div class="a" id="s0" style="left:290.0px;top:360.10px;font-size:21.5px;line-height:1;color:#0b1868;letter-spacing:0.836px;-webkit-text-stroke:0.6px currentColor;">Nosotros</div>
<div class="a" id="s1" style="left:299.0px;top:413.95px;font-size:14px;line-height:1;color:#111;letter-spacing:0.199px;">Quienes Somos</div>
<div class="a" id="s2" style="left:299.0px;top:457.65px;font-size:14px;line-height:1;color:#111;letter-spacing:0.619px;">Catalogos</div>
<div class="a" id="s3" style="left:299.0px;top:501.15px;font-size:14px;line-height:1;color:#2563eb;letter-spacing:0.779px;">Contacto</div>
<div class="a" id="s4" style="left:299.0px;top:544.15px;font-size:14px;line-height:1;color:#111;letter-spacing:0.378px;">Términos y condiciones</div>
<div class="a" id="s5" style="left:299.0px;top:587.75px;font-size:14px;line-height:1;color:#111;letter-spacing:0.474px;">Trabaja con nosotros</div>
<div class="a" id="c0" style="left:549.7px;top:341.68px;font-size:22px;line-height:1;color:#0b1868;font-weight:700;letter-spacing:1.380px;">Contactos</div>
<div class="a" id="c1" style="left:687.5px;top:396.73px;font-size:14.5px;line-height:1;color:#000;font-weight:700;letter-spacing:0.271px;">OFICINA PRINCIPAL</div>
<div class="a" id="c2" style="left:687.5px;top:418.68px;font-size:15.5px;line-height:1;color:#000;letter-spacing:0.572px;">Calle Esmeraldas 384</div>
<div class="a" id="c3" style="left:687.5px;top:441.08px;font-size:15.5px;line-height:1;color:#000;letter-spacing:0.435px;">Urb. Balconcillo – La Victoria</div>
<div class="a" id="c4" style="left:687.5px;top:463.48px;font-size:15.5px;line-height:1;color:#000;letter-spacing:0.419px;">(511) 265-5448</div>
<div class="a" id="c5" style="left:687.5px;top:485.88px;font-size:15.5px;line-height:1;color:#000;letter-spacing:0.912px;">ventas@grupo-vision.com</div>
<div class="a" id="c6" style="left:1047.0px;top:396.73px;font-size:14.5px;line-height:1;color:#000;font-weight:700;letter-spacing:-0.434px;">SUCURSALES</div>
<div class="a" id="c7" style="left:1047.0px;top:431.68px;font-size:15.5px;line-height:1;color:#000;letter-spacing:0.043px;">Sucursal HUANCAYO</div>
<div class="a" id="c8" style="left:1047.0px;top:454.38px;font-size:15.5px;line-height:1;color:#000;letter-spacing:-0.170px;">Sucursal AREQUIPA</div>
<div class="a" id="c9" style="left:1047.0px;top:477.08px;font-size:15.5px;line-height:1;color:#000;letter-spacing:0.050px;">Sucursal CHICLAYO</div>
<div class="a" id="c10" style="left:1047.0px;top:499.88px;font-size:15.5px;line-height:1;color:#000;letter-spacing:-0.120px;">Sucursal CHIMBOTE</div>
<div class="a" id="c11" style="left:1047.0px;top:522.48px;font-size:15.5px;line-height:1;color:#000;letter-spacing:0.304px;">Sucursal ICA</div>
<div class="a" id="c12" style="left:1047.0px;top:544.68px;font-size:15.5px;line-height:1;color:#000;letter-spacing:-0.153px;">Sucursal PIURA</div>
<div class="a" id="m1" style="left:567.6px;top:626.85px;font-size:14px;line-height:1;color:#202124;">Urb</div>
<div class="a" id="m2" style="left:567.6px;top:646.14px;font-size:12px;line-height:1;color:#5f6368;letter-spacing:-0.201px;-webkit-text-stroke:0;">Urb, Jr. las Esmeraldas 384, La</div>
<div class="a" id="m3" style="left:567.6px;top:660.74px;font-size:12px;line-height:1;color:#5f6368;letter-spacing:-0.164px;-webkit-text-stroke:0;">Victoria 15034, Peru</div>
<div class="a" id="m4" style="left:567.6px;top:683.34px;font-size:12px;line-height:1;color:#5f6368;letter-spacing:-0.218px;-webkit-text-stroke:0;">No reviews</div>
</body></html>
